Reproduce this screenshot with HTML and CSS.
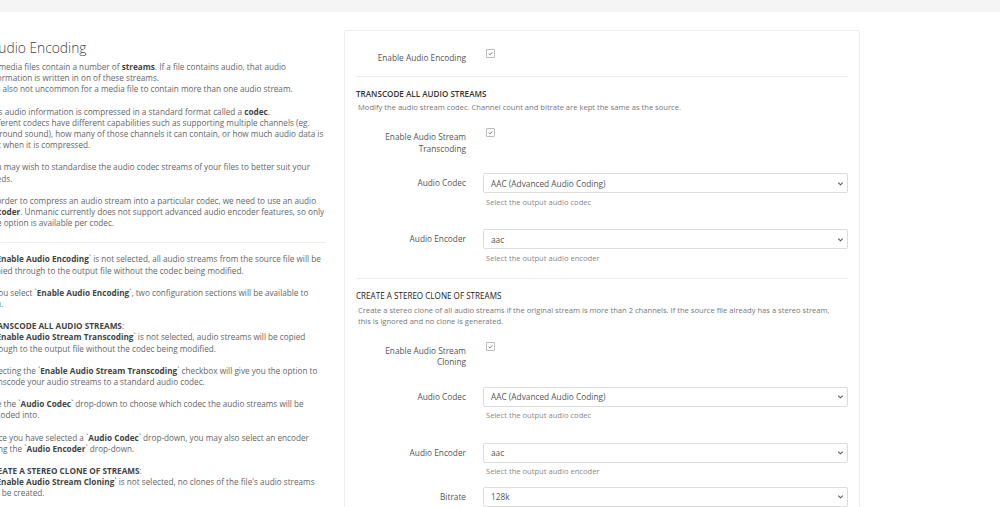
FILE: index.html
```html
<!DOCTYPE html>
<html lang="en">
<head>
    <meta charset="UTF-8">
    <meta name="viewport" content="width=device-width, initial-scale=1.0">
    <title>Audio Encoding</title>
    <link rel="stylesheet" href="styles.css">
</head>
<body>

<div class="topbar"></div>

<main class="page">
    <!-- Plugin description -->
    <section class="about">
        <h2>Audio Encoding</h2>
        <p>All media files contain a number of <strong>streams</strong>. If a file contains audio, that audio information is written in on of these streams.<br>It is also not uncommon for a media file to contain more than one audio stream.</p>
        <p>This audio information is compressed in a standard format called a <strong>codec</strong>.<br>Different codecs have different capabilities such as supporting multiple channels (eg. surround sound), how many of those channels it can contain, or how much audio data is lost when it is compressed.</p>
        <p>You may wish to standardise the audio codec streams of your files to better suit your needs.</p>
        <p>In order to compress an audio stream into a particular codec, we need to use an audio <strong>encoder</strong>. Unmanic currently does not support advanced audio encoder features, so only one option is available per codec.</p>
        <hr>
        <p>If `<strong>Enable Audio Encoding</strong>` is not selected, all audio streams from the source file will be copied through to the output file without the codec being modified.</p>
        <p>If you select `<strong>Enable Audio Encoding</strong>`, two configuration sections will be available to you.</p>
        <p><strong>TRANSCODE ALL AUDIO STREAMS</strong>:<br>If `<strong>Enable Audio Stream Transcoding</strong>` is not selected, audio streams will be copied through to the output file without the codec being modified.</p>
        <p>Selecting the `<strong>Enable Audio Stream Transcoding</strong>` checkbox will give you the option to transcode your audio streams to a standard audio codec.</p>
        <p>Use the `<strong>Audio Codec</strong>` drop-down to choose which codec the audio streams will be encoded into.</p>
        <p>Once you have selected a `<strong>Audio Codec</strong>` drop-down, you may also select an encoder using the `<strong>Audio Encoder</strong>` drop-down.</p>
        <p><strong>CREATE A STEREO CLONE OF STREAMS</strong>:<br>If `<strong>Enable Audio Stream Cloning</strong>` is not selected, no clones of the file's audio streams will be created.</p>
    </section>

    <!-- Plugin settings -->
    <section class="panel">
        <div class="field field-check">
            <label>Enable Audio Encoding</label>
            <span class="check"><svg viewBox="0 0 10 10"><path d="M2.5 5.2 L4.3 7 L7.6 3.2"/></svg></span>
        </div>
        <hr>

        <h3 class="group-title">TRANSCODE ALL AUDIO STREAMS</h3>
        <p class="group-desc">Modify the audio stream codec. Channel count and bitrate are kept the same as the source.</p>

        <div class="field field-check">
            <label>Enable Audio Stream Transcoding</label>
            <span class="check"><svg viewBox="0 0 10 10"><path d="M2.5 5.2 L4.3 7 L7.6 3.2"/></svg></span>
        </div>
        <div class="field">
            <label>Audio Codec</label>
            <div>
                <div class="select"><span>AAC (Advanced Audio Coding)</span><svg viewBox="0 0 10 10"><path d="M2.5 4 L5 6.5 L7.5 4"/></svg></div>
                <div class="help">Select the output audio codec</div>
            </div>
        </div>
        <div class="field">
            <label>Audio Encoder</label>
            <div>
                <div class="select"><span>aac</span><svg viewBox="0 0 10 10"><path d="M2.5 4 L5 6.5 L7.5 4"/></svg></div>
                <div class="help">Select the output audio encoder</div>
            </div>
        </div>
        <hr>

        <h3 class="group-title group-title-light">CREATE A STEREO CLONE OF STREAMS</h3>
        <p class="group-desc">Create a stereo clone of all audio streams if the original stream is more than 2 channels. If the source file already has a stereo stream, this is ignored and no clone is generated.</p>

        <div class="field field-check">
            <label>Enable Audio Stream Cloning</label>
            <span class="check"><svg viewBox="0 0 10 10"><path d="M2.5 5.2 L4.3 7 L7.6 3.2"/></svg></span>
        </div>
        <div class="field">
            <label>Audio Codec</label>
            <div>
                <div class="select"><span>AAC (Advanced Audio Coding)</span><svg viewBox="0 0 10 10"><path d="M2.5 4 L5 6.5 L7.5 4"/></svg></div>
                <div class="help">Select the output audio codec</div>
            </div>
        </div>
        <div class="field">
            <label>Audio Encoder</label>
            <div>
                <div class="select"><span>aac</span><svg viewBox="0 0 10 10"><path d="M2.5 4 L5 6.5 L7.5 4"/></svg></div>
                <div class="help">Select the output audio encoder</div>
            </div>
        </div>
        <div class="field field-tight">
            <label>Bitrate</label>
            <div>
                <div class="select"><span>128k</span><svg viewBox="0 0 10 10"><path d="M2.5 4 L5 6.5 L7.5 4"/></svg></div>
            </div>
        </div>
    </section>
</main>

</body>
</html>
```

FILE: styles.css
```css
body {
    margin: 0;
    font-family: "Open Sans", "Liberation Sans", sans-serif;
    color: #666;
    background: #fff;
}
.topbar {
    height: 12px;
    background-color: #f5f5f5;
}
.page {
    display: flex;
    align-items: flex-start;
    padding-top: 18px;
}

/* left column */
.about {
    margin-left: -13px;
    width: 339px;
    flex-shrink: 0;
    padding-top: 8px;
}
.about h2 {
    font-size: 13.8px;
    font-weight: 300;
    line-height: 20px;
    color: #444;
    margin: 0 0 3px 3px;
}
.about p {
    font-size: 8.2px;
    line-height: 11.2px;
    margin: 0 0 11px;
}
.about strong {
    font-weight: 700;
    color: #444;
}
.about hr {
    border: 0;
    border-top: 1px solid #eee;
    margin: 13.5px 0 10.5px;
}

/* settings panel */
.panel {
    box-sizing: border-box;
    width: 516px;
    margin-left: 18px;
    flex-shrink: 0;
    min-height: 500px;
    border: 1px solid #ececec;
    border-radius: 2px;
    padding: 18px 11px 0;
    display: flex;
    flex-direction: column;
}
.panel hr {
    width: 100%;
    border: 0;
    border-top: 1px solid #eee;
    margin: 12px 0 12px;
}
.group-title {
    font-size: 8.1px;
    line-height: 10px;
    font-weight: 600;
    color: #333;
    margin: 0 0 3.5px;
}
.group-title-light {
    font-weight: 400;
    color: #222;
}
.group-desc {
    font-size: 7.6px;
    line-height: 11px;
    color: #777;
    margin: 0;
    padding: 0 14px 0 2px;
}
.field {
    display: grid;
    grid-template-columns: 110px 1fr;
    column-gap: 17px;
    margin-top: 19px;
}
.field label {
    text-align: right;
    font-size: 8.3px;
    line-height: 11.5px;
    color: #555;
    padding-top: 3px;
}
.field-check {
    margin-top: 15px;
}
.field-check:first-child {
    margin-top: 0;
}
.field-tight {
    margin-top: 7px;
}
.field:not(.field-check) label {
    padding-top: 4px;
}
.check {
    box-sizing: border-box;
    width: 9px;
    height: 9px;
    margin-left: 3px;
    border: 1px solid #bbb;
    border-radius: 1px;
    display: flex;
}
.check svg {
    width: 100%;
    height: 100%;
    fill: none;
    stroke: #555;
    stroke-width: 1.1;
}
.select {
    box-sizing: border-box;
    height: 20px;
    border: 1px solid #dcdcdc;
    border-radius: 2px;
    display: flex;
    align-items: center;
    justify-content: space-between;
    padding: 0 2px 0 7px;
    font-size: 8.3px;
    color: #555;
}
.select svg {
    width: 9px;
    height: 9px;
    fill: none;
    stroke: #555;
    stroke-width: 1.2;
}
.help {
    font-size: 7.6px;
    line-height: 11px;
    color: #888;
    margin-top: 3.5px;
    padding: 0 0 2.5px 3px;
}
```
